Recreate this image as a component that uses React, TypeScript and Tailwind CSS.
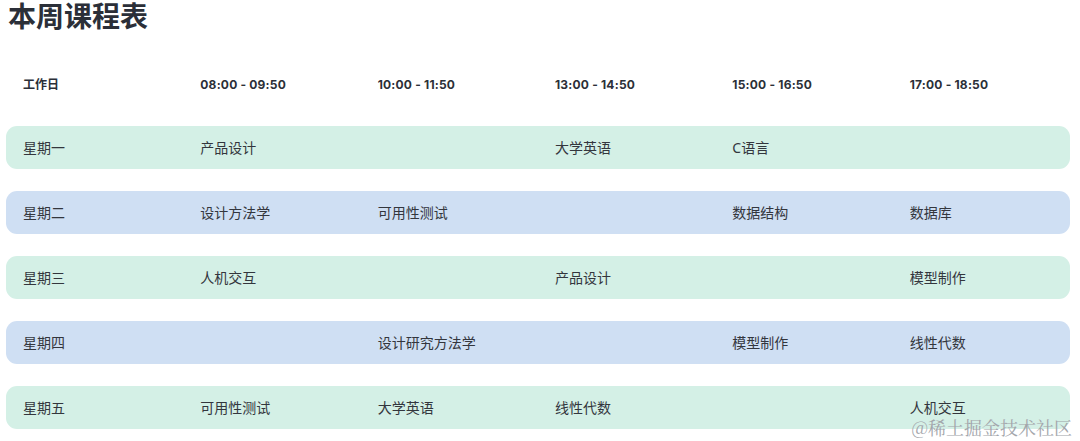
import React from "react";

const times = ["08:00 - 09:50", "10:00 - 11:50", "13:00 - 14:50", "15:00 - 16:50", "17:00 - 18:50"];

const rows: { day: string; cells: string[]; green: boolean }[] = [
  { day: "星期一", cells: ["产品设计", "", "大学英语", "C语言", ""], green: true },
  { day: "星期二", cells: ["设计方法学", "可用性测试", "", "数据结构", "数据库"], green: false },
  { day: "星期三", cells: ["人机交互", "", "产品设计", "", "模型制作"], green: true },
  { day: "星期四", cells: ["", "设计研究方法学", "", "模型制作", "线性代数"], green: false },
  { day: "星期五", cells: ["可用性测试", "大学英语", "线性代数", "", "人机交互"], green: true },
];

export default function App() {
  return (
    <div
      className="relative w-[1080px] h-[441px] bg-white overflow-hidden text-[#2c2f36]"
      style={{ fontFamily: '"Noto Sans", "Noto Sans CJK SC", sans-serif' }}
    >
      <h1 className="pl-[8px] pt-[0px] text-[28px] font-bold leading-[32px] text-[#2b2f38]">本周课程表</h1>
      <div className="px-[6px] w-[1076px]">
        <div className="grid grid-cols-6 h-[34px] mt-[36px] items-center text-[12px] font-bold text-[#2b2f38]" style={{ fontFamily: 'Inter, "Noto Sans CJK SC", sans-serif' }}>
          <div className="pl-[17px]">工作日</div>
          {times.map((t) => (
            <div key={t} className="pl-[17px] tracking-[0.2px]">{t}</div>
          ))}
        </div>
        <div className="flex flex-col gap-[22px] mt-[24px]">
          {rows.map((r) => (
            <div
              key={r.day}
              className={
                "grid grid-cols-6 h-[43px] items-center rounded-[11px] text-[14px] text-[#33363d] " +
                (r.green ? "bg-[#d4f0e6]" : "bg-[#cfdff3]")
              }
            >
              <div className="pl-[17px]">{r.day}</div>
              {r.cells.map((c, i) => (
                <div key={i} className="pl-[17px]">{c}</div>
              ))}
            </div>
          ))}
        </div>
      </div>
      <div
        className="absolute right-[8px] bottom-[3px] text-[18px] leading-[22px] text-[#a3a6ab]"
        style={{ fontFamily: '"Noto Serif CJK SC", "Noto Sans CJK SC", serif' }}
      >
        @稀土掘金技术社区
      </div>
    </div>
  );
}
